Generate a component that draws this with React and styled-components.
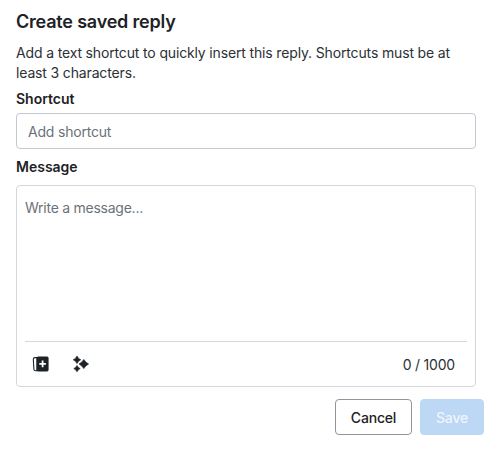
import styled, { createGlobalStyle } from "styled-components";

const GlobalStyle = createGlobalStyle`
  html, body {
    margin: 0;
    background: #fff;
    font-family: Inter, "Liberation Sans", sans-serif;
    color: #1d2226;
  }
  * {
    box-sizing: border-box;
  }
`;

const Page = styled.div`
  width: 493px;
  height: 450px;
  padding: 9px 9px 0 16px;
  display: flex;
  flex-direction: column;
`;

const Title = styled.h2`
  margin: 0;
  font-size: 18px;
  line-height: 26px;
  font-weight: 600;
  letter-spacing: -0.2px;
  color: #1d2226;
`;

const Description = styled.p`
  margin: 8px 0 0;
  font-size: 14px;
  line-height: 20px;
  letter-spacing: -0.15px;
  color: #2b3035;
  width: 460px;
`;

const Label = styled.label`
  display: block;
  margin-top: ${(p) => p.$top}px;
  font-size: 14px;
  line-height: 20px;
  font-weight: 600;
  color: #1d2226;
`;

const Input = styled.div`
  width: 460px;
  height: 36px;
  margin-top: 4px;
  padding: 0 11px;
  display: flex;
  align-items: center;
  border: 1px solid #c3c9d1;
  border-radius: 4px;
  font-size: 14px;
  letter-spacing: -0.2px;
  color: #6c7279;
`;

const MessageBox = styled.div`
  width: 460px;
  height: 202px;
  margin-top: 8px;
  padding: 12px 8px 0;
  display: flex;
  flex-direction: column;
  border: 1px solid #d4d7db;
  border-radius: 4px;
`;

const Placeholder = styled.div`
  flex: 1;
  font-size: 14px;
  line-height: 20px;
  letter-spacing: -0.25px;
  color: #6c7279;
`;

const Toolbar = styled.div`
  height: 45px;
  display: flex;
  align-items: center;
  gap: 22px;
  padding: 0 12px 0 7px;
  border-top: 1px solid #d4d7db;
`;

const Count = styled.span`
  margin-left: auto;
  font-size: 14px;
  letter-spacing: -0.2px;
  color: #2b3035;
`;

const Footer = styled.div`
  display: flex;
  justify-content: flex-end;
  gap: 8px;
  margin-top: 12px;
`;

const Button = styled.div`
  height: 36px;
  display: flex;
  align-items: center;
  justify-content: center;
  width: ${(p) => p.$width}px;
  border-radius: 4px;
  font-size: 14px;
  font-weight: 500;
  letter-spacing: -0.2px;
  border: 1px solid ${(p) => (p.$primary ? "#bcd8f5" : "#8e959c")};
  background: ${(p) => (p.$primary ? "#bcd8f5" : "#fff")};
  color: ${(p) => (p.$primary ? "#eef5fc" : "#1d2226")};
`;

const CardPlusIcon = () => (
  <svg width="18" height="18" viewBox="0 0 18 18">
    <path d="M3 2.6 H5 V15.8 H3.6 Q2 15.8 1.9 14.2 L1.3 4.2 Q1.3 2.6 3 2.6 Z" fill="none" stroke="#1d2226" strokeWidth="1.1" />
    <rect x="4.6" y="1.4" width="12" height="15" rx="1.6" fill="#1d2226" />
    <path d="M10.6 5.6 V12.2 M7.3 8.9 H13.9" stroke="#fff" strokeWidth="1.8" />
  </svg>
);

const SparkleIcon = () => (
  <svg width="18" height="18" viewBox="0 0 18 18" fill="#1d2226" stroke="#1d2226" strokeWidth="0.6" strokeLinejoin="round">
    <path d="M5 1 L6.6 3.4 L8.8 4.8 L6.6 6.2 L5 8.6 L3.4 6.2 L1.2 4.8 L3.4 3.4 Z" />
    <path d="M11.8 4.4 L13.8 7 L16.6 9 L13.8 11 L11.8 13.6 L9.8 11 L7 9 L9.8 7 Z" />
    <path d="M5 10.4 L6.4 12.4 L8.2 13.6 L6.4 14.8 L5 16.8 L3.6 14.8 L1.8 13.6 L3.6 12.4 Z" />
  </svg>
);

export default function App() {
  return (
    <>
      <GlobalStyle />
      <Page>
        <Title>Create saved reply</Title>
        <Description>
          Add a text shortcut to quickly insert this reply. Shortcuts must be at least 3 characters.
        </Description>
        <Label $top={6}>Shortcut</Label>
        <Input>Add shortcut</Input>
        <Label $top={8}>Message</Label>
        <MessageBox>
          <Placeholder>Write a message...</Placeholder>
          <Toolbar>
            <CardPlusIcon />
            <SparkleIcon />
            <Count>0 / 1000</Count>
          </Toolbar>
        </MessageBox>
        <Footer>
          <Button $width={77}>Cancel</Button>
          <Button $width={64} $primary>Save</Button>
        </Footer>
      </Page>
    </>
  );
}
